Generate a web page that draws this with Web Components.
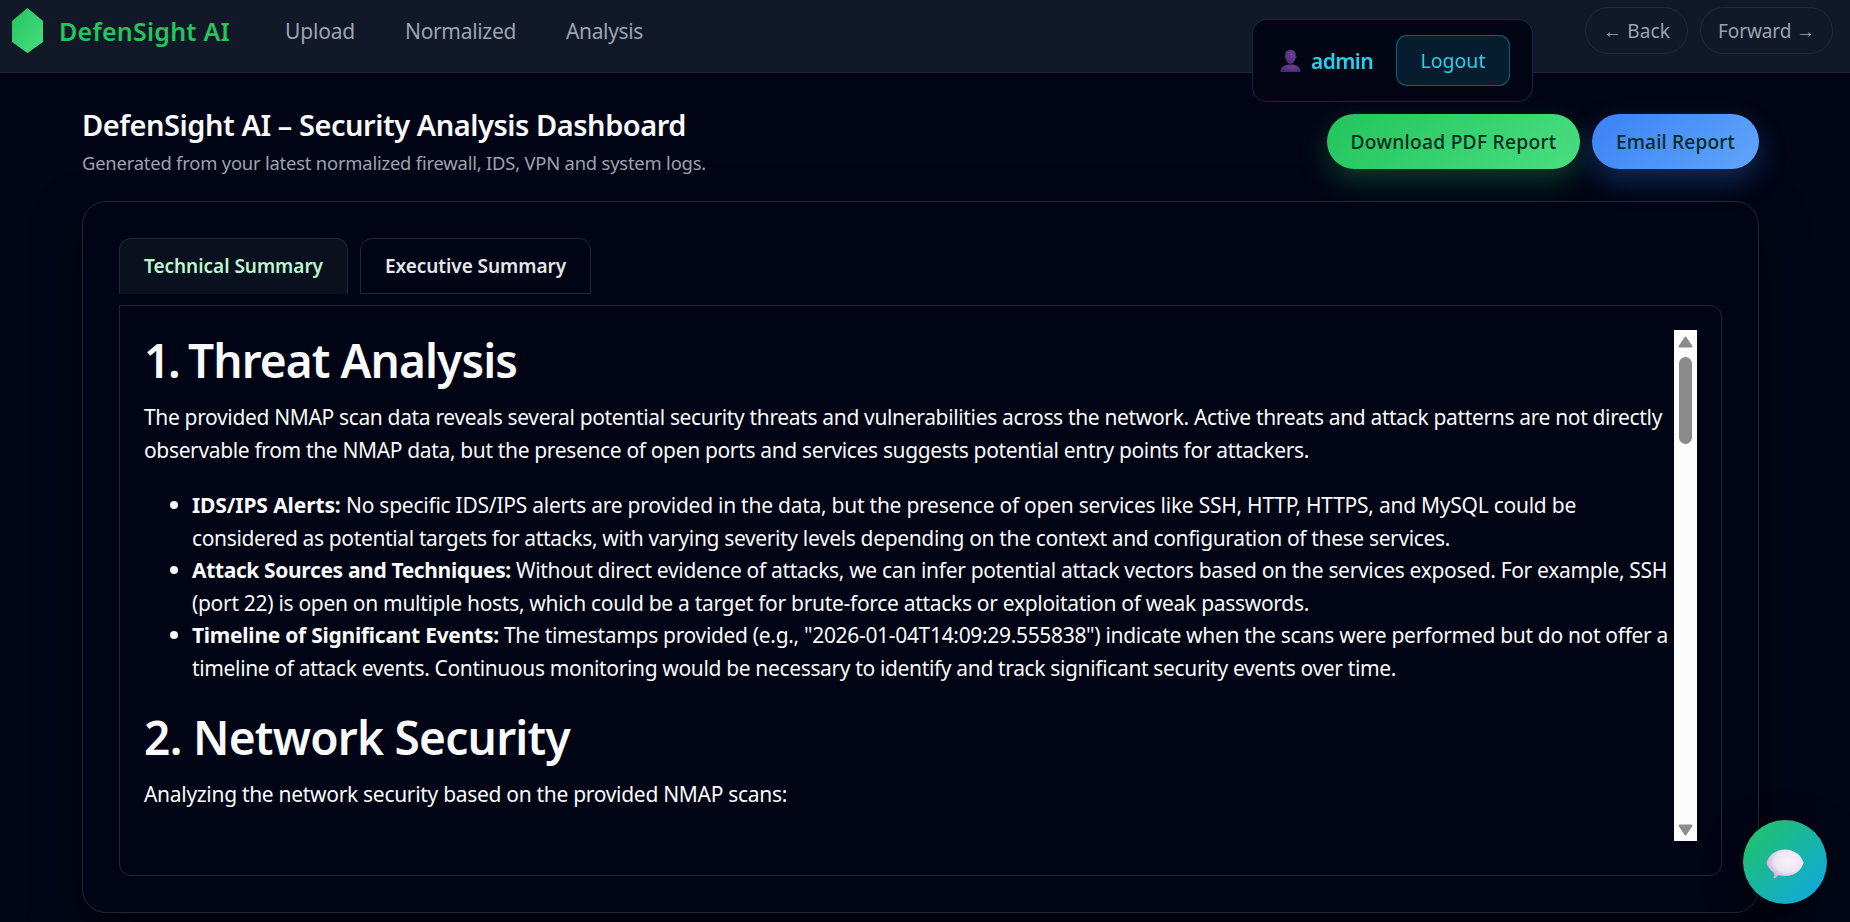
<!DOCTYPE html>
<html lang="en">
<head>
<meta charset="UTF-8">
<title>DefenSight AI</title>
<style>
  :root {
    --bg: #020516;
    --nav: #111827;
    --line: #1f2937;
    --green: #22c55e;
    --muted: #9ca3af;
    --cyan: #22d3ee;
  }

  body {
    margin: 0;
    height: 922px;
    overflow: hidden;
    background: var(--bg);
    color: #f9fafb;
    font-family: "Noto Sans", "Open Sans", sans-serif;
    font-size: 21px;
  }

  main {
    padding: 32px 91px 0 82px;
  }
</style>
</head>
<body>
  <nav-bar></nav-bar>
  <user-panel><text-line slot="name" width="62">admin</text-line></user-panel>

  <main>
    <page-head>
      <text-line slot="title" width="604">DefenSight AI – Security Analysis Dashboard</text-line>
      <text-line slot="subtitle" width="624">Generated from your latest normalized firewall, IDS, VPN and system logs.</text-line>
      <pill-button slot="actions" style="width: 253px"><text-line width="206">Download PDF Report</text-line></pill-button>
      <pill-button slot="actions" class="blue" style="width: 167px"><text-line width="119">Email Report</text-line></pill-button>
    </page-head>

    <report-card>
      <tab-button slot="tabs" class="active" style="width: 229px"><text-line width="179">Technical Summary</text-line></tab-button>
      <tab-button slot="tabs" style="width: 231px"><text-line width="181">Executive Summary</text-line></tab-button>
      <report-body></report-body>
    </report-card>
  </main>

  <chat-button></chat-button>

<template id="nav-bar">
  <style>
    :host {
      display: flex;
      align-items: center;
      box-sizing: border-box;
      height: 73px;
      padding: 0 17px 11px 12px;
      background: var(--nav);
      border-bottom: 1px solid var(--line);
      color: var(--muted);
    }

    svg {
      margin-right: 16px;
    }

    .brand {
      margin: 1px 55px 0 0;
      color: var(--green);
      font-size: 25px;
      font-weight: 600;
    }

    nav {
      display: flex;
      gap: 50px;
      flex: 1;
    }

    .history {
      display: flex;
      gap: 12px;
      font-size: 19px;
    }

    .history button {
      display: flex;
      align-items: center;
      justify-content: center;
      width: 103px;
      height: 47px;
      padding: 0;
      background: transparent;
      border: 1px solid var(--line);
      border-radius: 24px;
      color: inherit;
      font: inherit;
    }

    .history button + button {
      width: 133px;
    }
  </style>
  <svg width="31" height="45" viewBox="0 0 31 45">
    <defs>
      <linearGradient id="g" x1="0" y1="0" x2="1" y2="1">
        <stop offset="0" stop-color="#22c55e"/>
        <stop offset="1" stop-color="#4ade80"/>
      </linearGradient>
    </defs>
    <path d="M15.5 0 31 13v21L15.5 45 0 34V13z" fill="url(#g)"/>
  </svg>
  <text-line class="brand" width="171">DefenSight AI</text-line>
  <nav>
    <text-line width="70">Upload</text-line>
    <text-line width="111">Normalized</text-line>
    <text-line width="77">Analysis</text-line>
  </nav>
  <div class="history">
    <button type="button"><text-line width="67">← Back</text-line></button>
    <button type="button"><text-line width="97">Forward →</text-line></button>
  </div>
</template>

<template id="user-panel">
  <style>
    :host {
      display: flex;
      align-items: center;
      box-sizing: border-box;
      position: fixed;
      top: 19px;
      left: 1252px;
      width: 281px;
      height: 83px;
      padding: 0 22px 0 27px;
      background: rgba(2, 4, 20, 0.96);
      border: 1px solid rgba(34, 211, 238, 0.2);
      border-radius: 15px;
      color: var(--cyan);
      z-index: 2;
    }

    .name {
      flex: 1;
      margin-left: 10px;
      font-weight: 600;
    }

    button {
      display: flex;
      align-items: center;
      justify-content: center;
      width: 114px;
      height: 51px;
      padding: 0;
      background: rgba(34, 211, 238, 0.12);
      border: 1px solid rgba(34, 211, 238, 0.36);
      border-radius: 11px;
      color: inherit;
      font: inherit;
      font-size: 19.5px;
    }
  </style>
  <svg width="21" height="22" viewBox="0 0 21 22">
    <defs>
      <radialGradient id="p" cx=".6" cy=".3" r=".8">
        <stop offset="0" stop-color="#6b429c"/>
        <stop offset="1" stop-color="#462668"/>
      </radialGradient>
    </defs>
    <path d="M10.5 0c4 0 5.600 2 5.300 5.600.9.300.7 2.500-.4 2.900C14.800 11.800 13 14 10.500 14s-4.300-2.200-4.900-5.500c-1.100-.4-1.300-2.600-.4-2.900C4.900 2 6.500 0 10.500 0z" fill="url(#p)"/>
    <path d="M.3 22c.3-5 4.300-7.400 10.200-7.400S20.400 17 20.700 22z" fill="url(#p)"/>
  </svg>
  <div class="name"><slot name="name"></slot></div>
  <button type="button"><text-line width="65">Logout</text-line></button>
</template>

<template id="page-head">
  <style>
    :host {
      display: flex;
      justify-content: space-between;
      height: 96px;
    }

    .title {
      margin-bottom: 5px;
      font-size: 29px;
      font-weight: 600;
      line-height: 40px;
    }

    .subtitle {
      color: var(--muted);
      font-size: 18.4px;
      line-height: 26px;
    }

    .actions {
      display: flex;
      gap: 12px;
      margin-top: 9px;
    }
  </style>
  <div>
    <div class="title"><slot name="title"></slot></div>
    <div class="subtitle"><slot name="subtitle"></slot></div>
  </div>
  <div class="actions"><slot name="actions"></slot></div>
</template>

<template id="pill-button">
  <style>
    :host {
      display: flex;
      align-items: center;
      justify-content: center;
      height: 55px;
      background: linear-gradient(135deg, #22c55e, #4ade80);
      border-radius: 28px;
      box-shadow: 0 12px 29px rgba(34, 197, 94, 0.28);
      color: #022c22;
      font-size: 19.2px;
      font-weight: 500;
    }

    :host(.blue) {
      background: linear-gradient(135deg, #3b82f6, #60a5fa);
      box-shadow: 0 12px 29px rgba(59, 130, 246, 0.3);
    }
  </style>
  <slot></slot>
</template>

<template id="report-card">
  <style>
    :host {
      display: flex;
      flex-direction: column;
      box-sizing: border-box;
      height: 712px;
      padding: 36px;
      background: #010414;
      border: 1px solid var(--line);
      border-radius: 24px;
      box-shadow: 0 20px 48px rgba(0, 0, 0, 0.6);
    }

    .tabs {
      display: flex;
      gap: 12px;
      margin-bottom: 11px;
    }
  </style>
  <div class="tabs"><slot name="tabs"></slot></div>
  <slot></slot>
</template>

<template id="tab-button">
  <style>
    :host {
      display: flex;
      align-items: center;
      justify-content: center;
      box-sizing: border-box;
      height: 56px;
      border: 1px solid var(--line);
      border-radius: 12px 12px 0 0;
      color: #e5e7eb;
      font-size: 19px;
      font-weight: 600;
    }

    :host(.active) {
      background: #0a101e;
      border-bottom-color: #0a101e;
      color: #bbf7d0;
    }
  </style>
  <slot></slot>
</template>

<template id="report-body">
  <style>
    :host {
      display: flex;
      justify-content: space-between;
      flex: 1;
      box-sizing: border-box;
      padding: 24px 24px 34px;
      border: 1px solid var(--line);
      border-radius: 0 12px 12px 12px;
    }

    article {
      line-height: 32.5px;
    }

    h1 {
      display: flex;
      margin: 0 0 11px;
      font-size: 46px;
      font-weight: 600;
      line-height: 60px;
    }

    p {
      margin: 0;
    }

    ul {
      margin: 23px 0;
      padding-left: 48px;
      list-style: none;
    }

    li > div {
      display: flex;
    }

    li > div:first-child::before {
      content: "";
      align-self: center;
      width: 8px;
      height: 8px;
      margin: 0 14px 0 -22px;
      border-radius: 50%;
      background: #f9fafb;
    }

    b {
      font-weight: 700;
    }
  </style>
  <article>
    <h1><text-line width="44">1. </text-line><text-line width="329">Threat Analysis</text-line></h1>
    <p>
      <text-line width="1518">The provided NMAP scan data reveals several potential security threats and vulnerabilities across the network. Active threats and attack patterns are not directly</text-line>
      <text-line width="1165">observable from the NMAP data, but the presence of open ports and services suggests potential entry points for attackers.</text-line>
    </p>
    <ul>
      <li>
        <div><b><text-line width="154">IDS/IPS Alerts: </text-line></b><text-line width="1230">No specific IDS/IPS alerts are provided in the data, but the presence of open services like SSH, HTTP, HTTPS, and MySQL could be</text-line></div>
        <text-line width="1258">considered as potential targets for attacks, with varying severity levels depending on the context and configuration of these services.</text-line>
      </li>
      <li>
        <div><b><text-line width="324">Attack Sources and Techniques: </text-line></b><text-line width="1151">Without direct evidence of attacks, we can infer potential attack vectors based on the services exposed. For example, SSH</text-line></div>
        <text-line width="1117">(port 22) is open on multiple hosts, which could be a target for brute-force attacks or exploitation of weak passwords.</text-line>
      </li>
      <li>
        <div><b><text-line width="312">Timeline of Significant Events: </text-line></b><text-line width="1164">The timestamps provided (e.g., "2026-01-04T14:09:29.555838") indicate when the scans were performed but do not offer a</text-line></div>
        <text-line width="1204">timeline of attack events. Continuous monitoring would be necessary to identify and track significant security events over time.</text-line>
      </li>
    </ul>
    <h1><text-line width="49">2. </text-line><text-line width="377">Network Security</text-line></h1>
    <p><text-line width="643">Analyzing the network security based on the provided NMAP scans:</text-line></p>
  </article>
  <scroll-track></scroll-track>
</template>

<template id="scroll-track">
  <style>
    :host {
      display: flex;
      flex-direction: column;
      align-items: center;
      box-sizing: border-box;
      flex: none;
      width: 23px;
      height: 511px;
      padding: 6px 0 5px;
      background: #fcfcfc;
    }

    .thumb {
      width: 13px;
      height: 87px;
      margin: 9px 0 auto;
      border-radius: 7px;
      background: #8b8b8b;
    }

    .down {
      transform: rotate(180deg);
    }
  </style>
  <svg width="15" height="12" viewBox="0 0 15 12"><path d="M7.500 1.500 13.500 10.500H1.500z" fill="#8b8b8b" stroke="#8b8b8b" stroke-width="2" stroke-linejoin="round"/></svg>
  <div class="thumb"></div>
  <svg class="down" width="15" height="12" viewBox="0 0 15 12"><path d="M7.500 1.500 13.500 10.500H1.500z" fill="#8b8b8b" stroke="#8b8b8b" stroke-width="2" stroke-linejoin="round"/></svg>
</template>

<template id="chat-button">
  <style>
    :host {
      display: grid;
      place-items: center;
      position: fixed;
      right: 23px;
      bottom: 18px;
      width: 84px;
      height: 84px;
      border-radius: 50%;
      background: linear-gradient(135deg, #22c55e, #0ea5e9);
      box-shadow: 0 12px 36px rgba(0, 0, 0, 0.5);
    }

    svg {
      margin-top: 3px;
    }
  </style>
  <svg width="38" height="30" viewBox="0 0 38 30">
    <defs>
      <radialGradient id="b" cx=".6" cy=".4" r=".62">
        <stop offset="0" stop-color="#f7f3f9"/>
        <stop offset=".6" stop-color="#eee6f3"/>
        <stop offset="1" stop-color="#c5b0d6"/>
      </radialGradient>
    </defs>
    <path d="M.4 13.500C3 6 9.500.5 19 .5s16 5.500 18.600 13C35.500 21.500 29 27 19 27c-2.300 0-4.500-.3-6.500-.9-1 1.700-2.600 3-5 3.500.5-2 .6-3.900.2-6C4.500 21.300 1.500 18 .4 13.500z" fill="url(#b)"/>
  </svg>
</template>

<script>
  class TemplateElement extends HTMLElement {
    constructor() {
      super();
      const template = document.getElementById(this.localName);
      const shadowRoot = this.attachShadow({ mode: "open" });
      shadowRoot.append(template.content.cloneNode(true));
    }
  }

  // One line of text, tracked so that it fills the given width
  class TextLine extends HTMLElement {
    constructor() {
      super();
      this.attachShadow({ mode: "open" }).innerHTML = `
        <style>
          :host { display: block; flex: none; white-space: pre; }
          span { display: inline-block; }
        </style>
        <span><slot></slot></span>
      `.replace(/\n\s*/g, "");
    }

    connectedCallback() {
      const width = Number(this.getAttribute("width"));
      const span = this.shadowRoot.querySelector("span");
      const natural = span.getBoundingClientRect().width;
      const spacing = (width - natural) / this.textContent.length;

      this.style.width = `${width}px`;
      span.style.letterSpacing = `${spacing}px`;
    }
  }

  [
    "nav-bar",
    "user-panel",
    "page-head",
    "pill-button",
    "report-card",
    "tab-button",
    "report-body",
    "scroll-track",
    "chat-button",
  ].forEach((name) => customElements.define(name, class extends TemplateElement {}));

  // Defined last: it measures text inside the other elements' styles
  customElements.define("text-line", TextLine);
</script>
</body>
</html>
